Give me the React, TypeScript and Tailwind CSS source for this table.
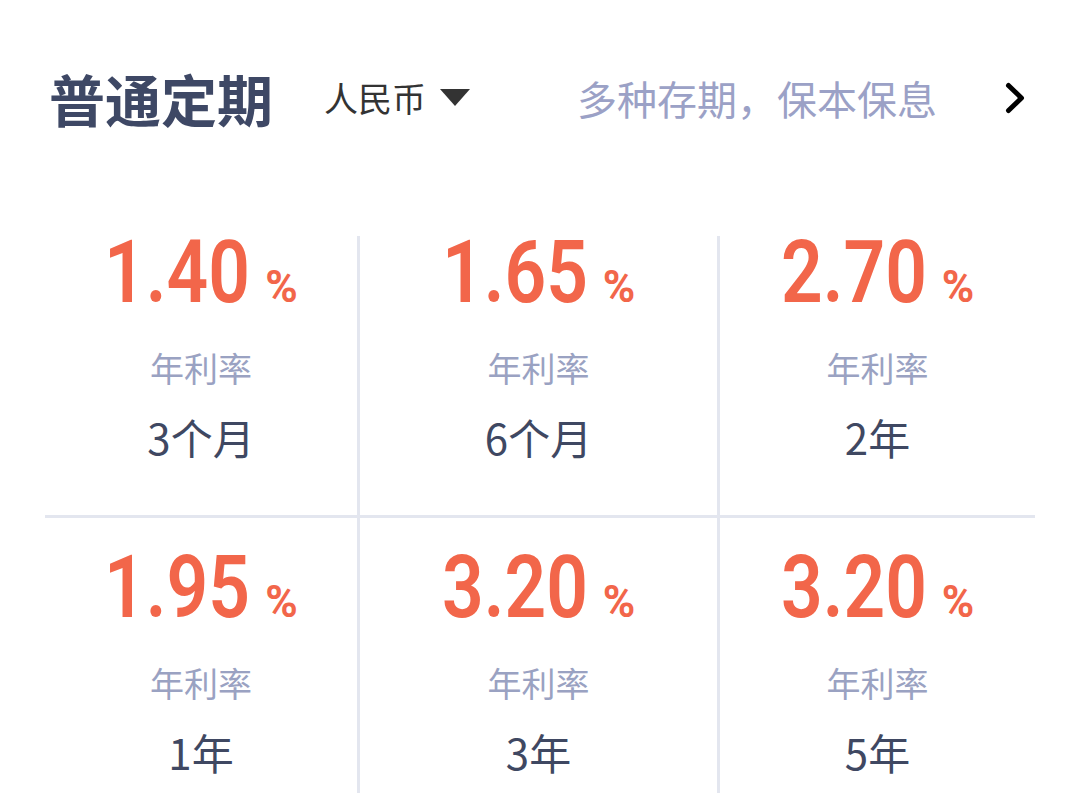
const rates = [
  [
    { rate: "1.40", term: "3个月" },
    { rate: "1.65", term: "6个月" },
    { rate: "2.70", term: "2年" },
  ],
  [
    { rate: "1.95", term: "1年" },
    { rate: "3.20", term: "3年" },
    { rate: "3.20", term: "5年" },
  ],
];

const cjk = "font-['Noto_Sans_CJK_SC','Noto_Sans',sans-serif]";

function RateCell({ rate, term, width, pad }: { rate: string; term: string; width: string; pad: string }) {
  return (
    <div className={`flex flex-col items-center ${width} ${pad}`}>
      <div className="flex items-baseline text-[#f2664a] font-['Roboto',sans-serif] font-semibold">
        <span className="inline-block origin-left scale-x-[0.83] text-[88px] leading-[64px] mr-[-29px]">
          {rate}
        </span>
        <span className="ml-[14px] text-[44px] font-bold leading-[64px]">%</span>
      </div>
      <div className={`mt-[29px] text-[34px] leading-[40px] text-[#9aa2c2] ${cjk}`}>年利率</div>
      <div className={`mt-[25px] text-[42px] leading-[48px] text-[#3f4862] ${cjk}`}>{term}</div>
    </div>
  );
}

function Divider() {
  return <div className="w-[3px] self-stretch bg-[#e3e6ef]" />;
}

function RateRow({ items, className, pad }: { items: { rate: string; term: string }[]; className: string; pad: string }) {
  return (
    <div className={`flex ${className}`}>
      <RateCell {...items[0]} width="w-[312px]" pad={pad} />
      <Divider />
      <RateCell {...items[1]} width="w-[357px]" pad={pad} />
      <Divider />
      <RateCell {...items[2]} width="w-[315px]" pad={pad} />
    </div>
  );
}

export default function App() {
  return (
    <div className={`h-[799px] w-[1079px] overflow-hidden bg-white ${cjk}`}>
      <div className="flex h-[196px] items-center pl-[49px] pr-[54px]">
        <h1 className="text-[56px] font-bold leading-none text-[#3e4865]">普通定期</h1>
        <span className="ml-[51px] text-[34px] leading-none text-[#333333]">人民币</span>
        <svg className="ml-[14px] mt-[-2px]" width="30" height="17" viewBox="0 0 30 17">
          <polygon points="0,0 30,0 15,17" fill="#333333" />
        </svg>
        <span className="ml-auto text-[40px] leading-none text-[#9ba1c6]">多种存期，保本保息</span>
        <svg className="ml-[68px]" width="20" height="32" viewBox="0 0 20 32">
          <path d="M3.5 3.5 L16.5 16 L3.5 28.5" fill="none" stroke="#000" strokeWidth="5" strokeLinecap="round" strokeLinejoin="round" />
        </svg>
      </div>

      <div className="mx-[45px] mt-[40px] w-[990px]">
        <RateRow items={rates[0]} className="h-[279px]" pad="pt-[4px]" />
        <div className="h-[3px] w-full bg-[#e3e6ef]" />
        <RateRow items={rates[1]} className="h-[275px]" pad="pt-[37px]" />
      </div>
    </div>
  );
}
